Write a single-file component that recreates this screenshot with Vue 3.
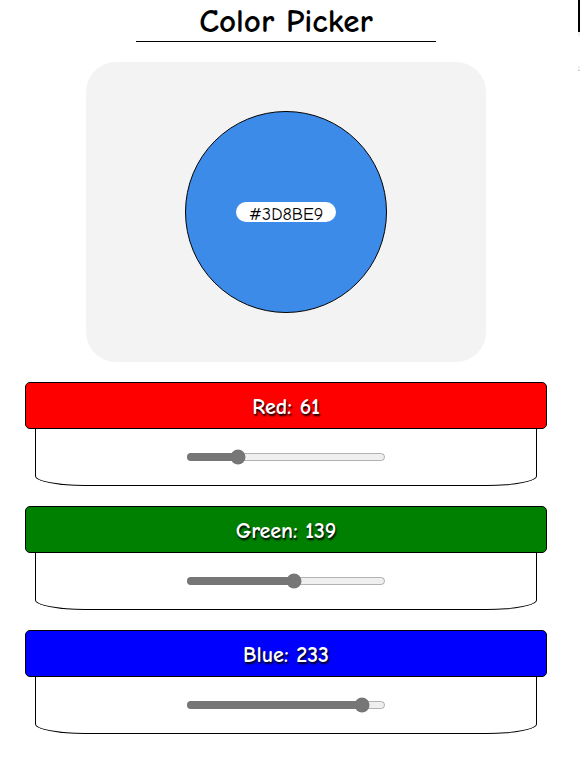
<script setup>
import { computed, reactive } from 'vue'

const channels = reactive([
  { id: 'red', label: 'Red', value: 61 },
  { id: 'green', label: 'Green', value: 139 },
  { id: 'blue', label: 'Blue', value: 233 }
])

const hex = computed(() =>
  '#' + channels.map((c) => Number(c.value).toString(16).padStart(2, '0')).join('').toUpperCase()
)
</script>

<template>
  <div class="page">
    <main class="picker">
      <h1 class="title">Color Picker</h1>
      <section class="preview">
        <div class="swatch" :style="{ backgroundColor: hex }">
          <output class="code">{{ hex }}</output>
        </div>
      </section>
      <section v-for="c in channels" :key="c.id" class="channel">
        <label class="heading" :class="c.id" :for="c.id">{{ c.label }}: {{ c.value }}</label>
        <div class="control">
          <input :id="c.id" v-model.number="c.value" class="slider" type="range" min="0" max="255" />
        </div>
      </section>
    </main>
    <aside class="edge" aria-hidden="true">
      <div class="edge-bar"></div>
      <div class="edge-line"></div>
    </aside>
  </div>
</template>

<style>
body {
  background: #fff;
}
</style>

<style scoped>
.page {
  display: flex;
  gap: 6px;
  color: #000;
  font-family: "Comic Sans MS", "Comic Neue", "Noto Sans", sans-serif;
}

.picker {
  flex: 1;
  display: flex;
  flex-direction: column;
  align-items: center;
  gap: 20px;
  padding-bottom: 44px;
}

.title {
  box-sizing: border-box;
  width: 300px;
  max-width: 100%;
  height: 42px;
  margin: 0;
  border-bottom: 1px solid #000;
  font-size: 33px;
  line-height: 42px;
  text-align: center;
}

.preview {
  display: flex;
  align-items: center;
  justify-content: center;
  width: 400px;
  max-width: 100%;
  height: 300px;
  border-radius: 30px;
  background: #f3f3f3;
}

.swatch {
  display: flex;
  align-items: center;
  justify-content: center;
  width: 200px;
  height: 200px;
  border: 1px solid #000;
  border-radius: 50%;
}

.code {
  width: 100px;
  height: 20px;
  border-radius: 10px;
  background: #fff;
  font-size: 18px;
  line-height: 26px;
  text-align: center;
}

.channel {
  align-self: stretch;
  margin: 0 25px;
}

.heading {
  display: block;
  height: 45px;
  border: 1px solid #000;
  border-radius: 5px;
  color: #fff;
  font-size: 22px;
  font-weight: bold;
  line-height: 48px;
  text-align: center;
  text-shadow: 1px 2px 2px #000;
}

.red {
  background: #f00;
}

.green {
  background: #008000;
}

.blue {
  background: #00f;
}

.control {
  display: flex;
  align-items: center;
  justify-content: center;
  height: 56px;
  margin: 0 10px;
  border: 1px solid #000;
  border-top: 0;
  border-radius: 0 0 50px 50px / 0 0 10px 10px;
}

.slider {
  width: 200px;
  height: 16px;
  margin: 0;
  accent-color: #767676;
}

.edge {
  width: 2px;
}

.edge-bar {
  height: 32px;
  border-bottom: 4px solid #f0f0f0;
  background: #000;
}

.edge-line {
  height: 4px;
  margin-top: 30px;
  border-bottom: 1px solid #ccc;
  background: #f0f0f0;
}
</style>
